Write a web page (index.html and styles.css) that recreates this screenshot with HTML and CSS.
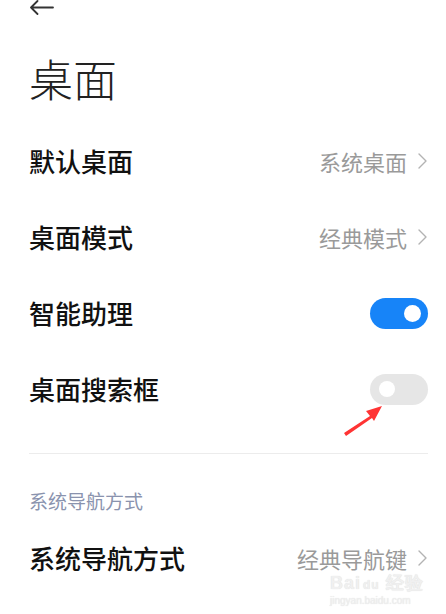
FILE: index.html
```html
<!DOCTYPE html>
<html lang="zh">
<head>
<meta charset="utf-8">
<link rel="stylesheet" href="styles.css">
</head>
<body>
<div class="page">
  <div class="topbar">
    <svg class="back" width="25" height="15" viewBox="0 0 25 15"><path d="M24 7.5H2 M8.5 1 L2 7.5 L8.5 14" fill="none" stroke="#333" stroke-width="1.8" stroke-linecap="round" stroke-linejoin="round"/></svg>
  </div>
  <h1 class="title">桌面</h1>
  <div class="list">
    <div class="row">
      <span class="label">默认桌面</span>
      <span class="value">系统桌面<svg class="chev" width="9" height="16" viewBox="0 0 9 16"><path d="M1 1 L8 8 L1 15" fill="none" stroke="#b3b3b3" stroke-width="1.4" stroke-linecap="round" stroke-linejoin="round"/></svg></span>
    </div>
    <div class="row">
      <span class="label">桌面模式</span>
      <span class="value">经典模式<svg class="chev" width="9" height="16" viewBox="0 0 9 16"><path d="M1 1 L8 8 L1 15" fill="none" stroke="#b3b3b3" stroke-width="1.4" stroke-linecap="round" stroke-linejoin="round"/></svg></span>
    </div>
    <div class="row">
      <span class="label">智能助理</span>
      <span class="switch on"><span class="knob"></span></span>
    </div>
    <div class="row">
      <span class="label">桌面搜索框</span>
      <span class="switch off"><span class="knob"></span></span>
    </div>
  </div>
  <div class="divider"></div>
  <div class="section">系统导航方式</div>
  <div class="row">
    <span class="label">系统导航方式</span>
    <span class="value">经典导航键<svg class="chev" width="9" height="16" viewBox="0 0 9 16"><path d="M1 1 L8 8 L1 15" fill="none" stroke="#b3b3b3" stroke-width="1.4" stroke-linecap="round" stroke-linejoin="round"/></svg></span>
  </div>
</div>
<svg class="pointer" width="50" height="36" viewBox="0 0 50 36"><path d="M1 29 L27 12 L23 7 L39 2 L31 17 L29 14 L3 32 Z" fill="#ff3434"/></svg>
<div class="watermark"><div class="wm1">Bai<span class="paw">du</span> 经验</div><div class="wm2">jingyan.baidu.com</div></div>
</body>
</html>
```
FILE: styles.css
```css
html, body {
  margin: 0;
  padding: 0;
  background: #fff;
}
body {
  width: 446px;
  height: 614px;
  overflow: hidden;
  position: relative;
  font-family: "Noto Sans CJK SC", "Noto Sans", sans-serif;
}
.page {
  padding: 0 18px 0 29px;
}
.topbar {
  height: 15px;
  display: flex;
  align-items: flex-start;
}
.back {
  display: block;
}
.title {
  margin: 41px 0 23px 0;
  font-size: 44px;
  line-height: 44px;
  font-weight: 300;
  color: #222;
}
.row {
  height: 76px;
  display: flex;
  align-items: center;
  justify-content: space-between;
}
.label {
  font-size: 26px;
  font-weight: 500;
  color: #111;
  line-height: 30px;
}
.value {
  display: flex;
  align-items: center;
  gap: 11px;
  font-size: 22px;
  color: #9a9a9a;
  line-height: 26px;
}
.chev {
  display: block;
  margin-right: 1px;
}
.switch {
  width: 58px;
  height: 31px;
  border-radius: 16px;
  display: flex;
  align-items: center;
  box-sizing: border-box;
}
.switch.on {
  background: #1784f8;
  justify-content: flex-end;
  padding-right: 7px;
}
.switch.off {
  background: #e6e6e6;
  padding-left: 9px;
}
.knob {
  width: 17px;
  height: 17px;
  border-radius: 50%;
  background: #fff;
}
.switch.off .knob {
  width: 16px;
  height: 16px;
}
.divider {
  margin-top: 26px;
  height: 1px;
  background: #ececec;
}
.section {
  margin-top: 36px;
  font-size: 19px;
  line-height: 22px;
  color: #8a93ae;
}
.section + .row {
  margin-top: 8px;
}
.pointer {
  position: absolute;
  left: 343px;
  top: 404px;
}
.watermark {
  position: absolute;
  left: 330px;
  top: 574px;
  color: #f0f0f0;
  font-family: "Liberation Sans", sans-serif;
  text-shadow: 0 0 1px #d8d8d8;
}
.wm1 {
  font-size: 18px;
  line-height: 18px;
  font-weight: bold;
  letter-spacing: 1px;
}
.paw {
  font-size: 12px;
  margin-left: 2px;
}
.wm2 {
  font-size: 10px;
  line-height: 12px;
  margin-top: 1px;
}
```
